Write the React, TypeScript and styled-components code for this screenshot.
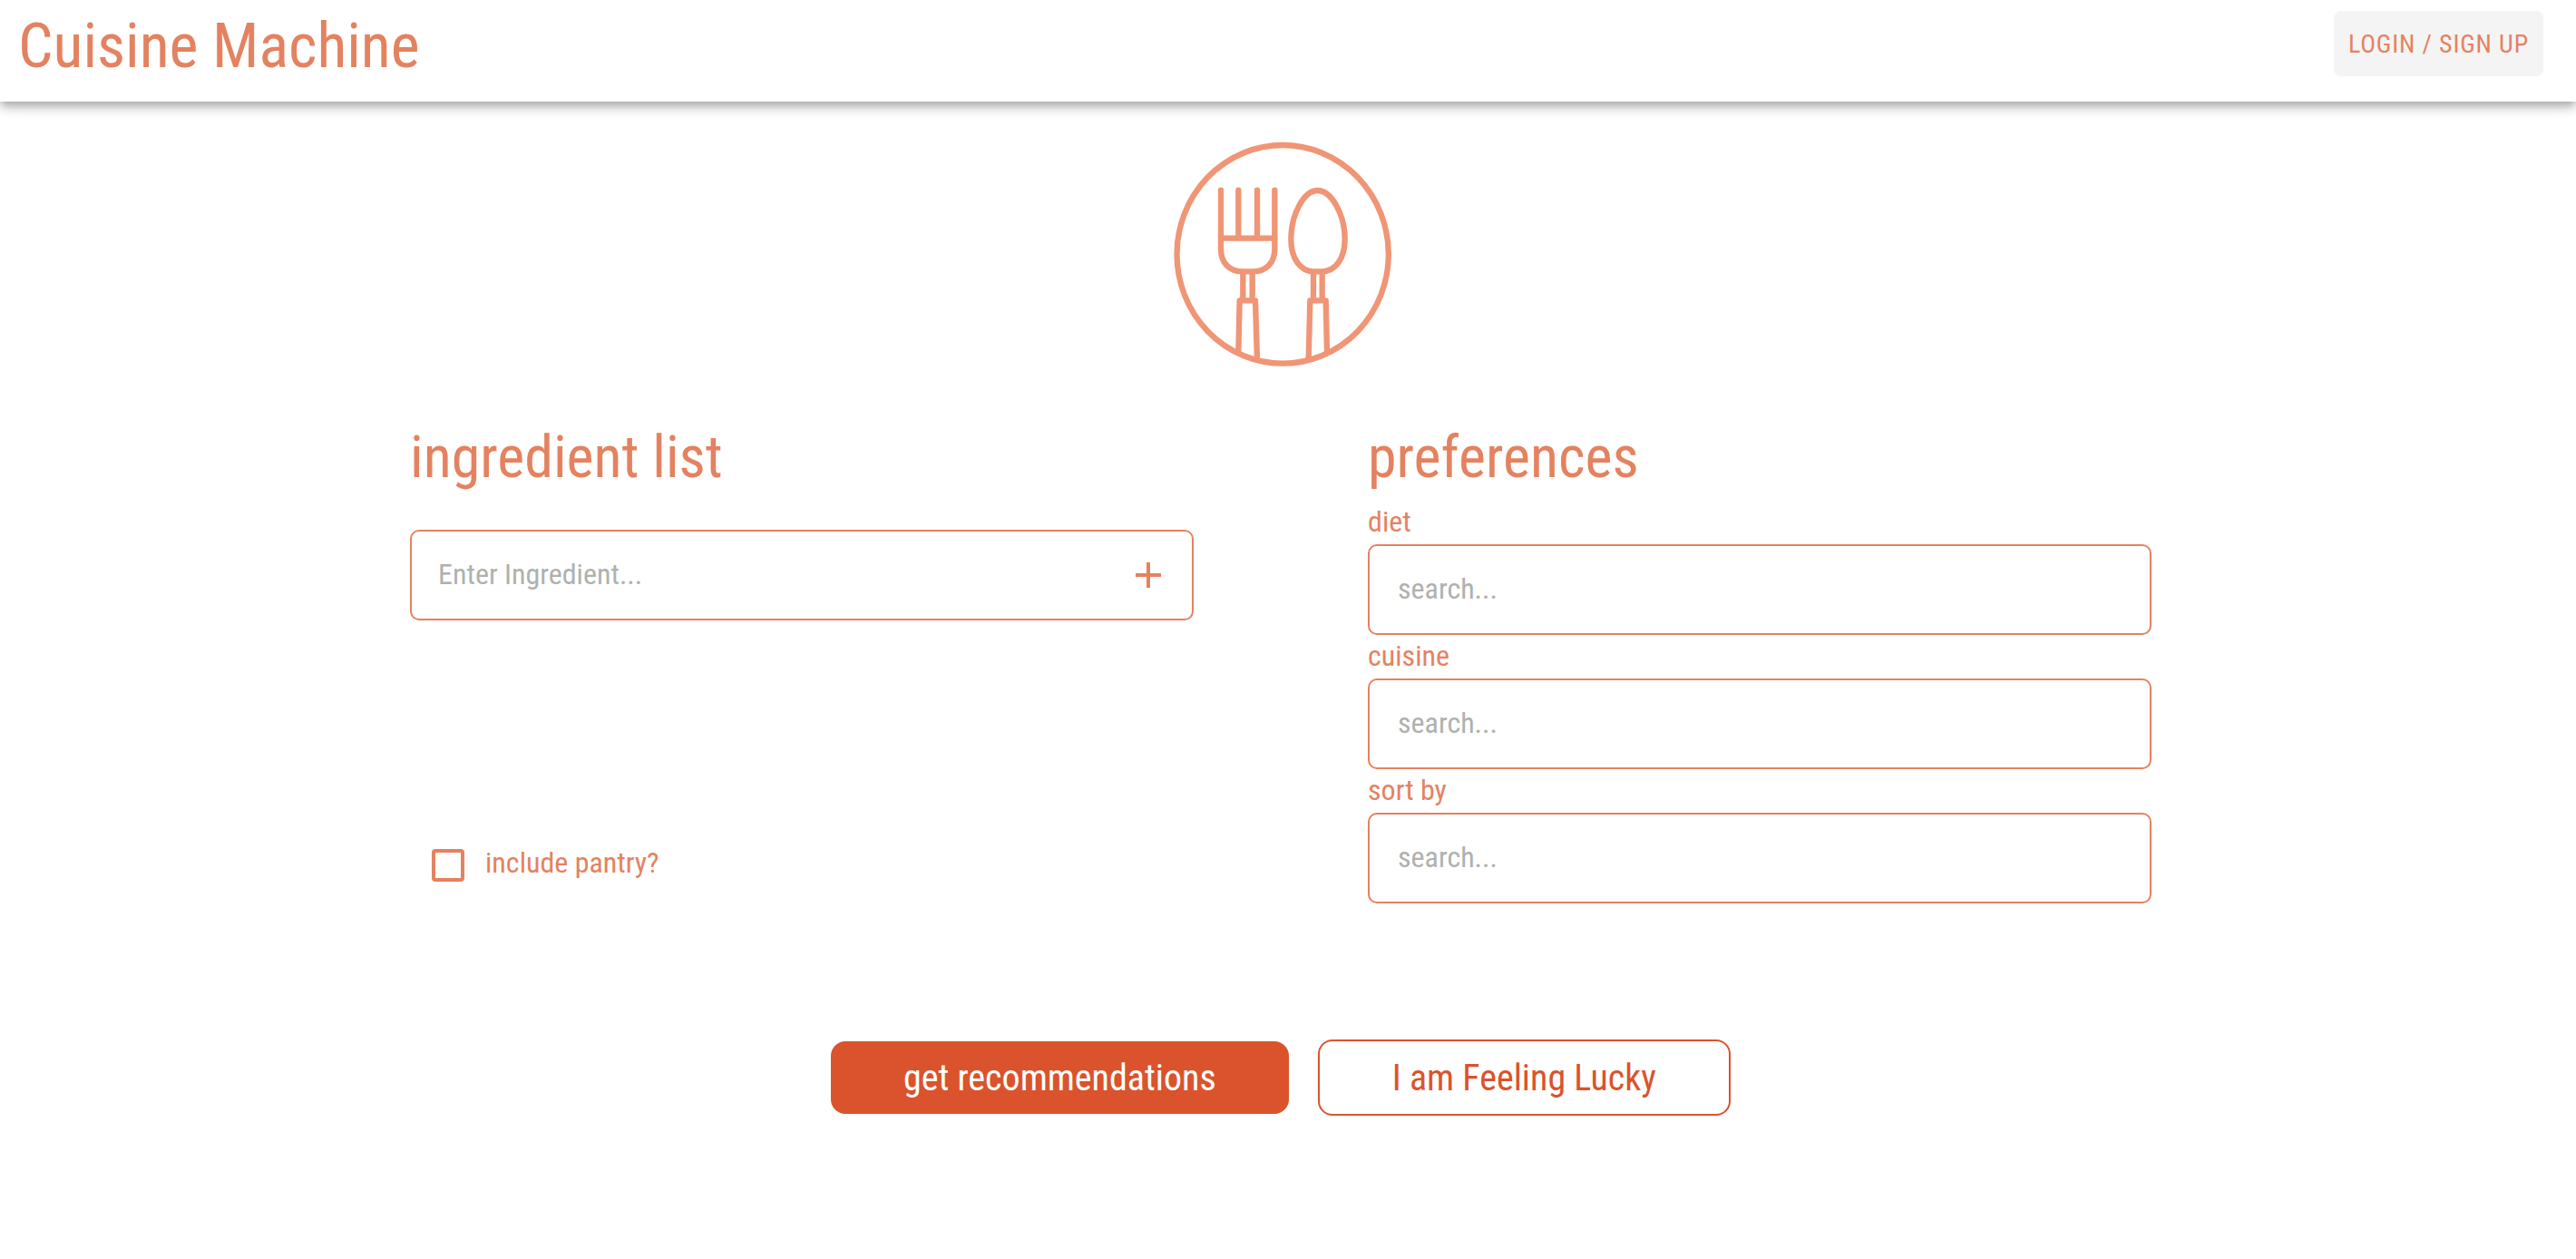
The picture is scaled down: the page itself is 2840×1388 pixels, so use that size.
import React from "react";
import styled, { createGlobalStyle } from "styled-components";

const coral = "#e48260";
const rust = "#da532c";

const GlobalStyle = createGlobalStyle`
  *, *::before, *::after { box-sizing: border-box; }
  body {
    margin: 0;
    background: #fff;
    color: ${coral};
    font-family: "Roboto Condensed", Roboto, sans-serif;
    font-size: 32px;
  }
  button, input { font-family: inherit; }
`;

const Header = styled.header`
  display: flex;
  align-items: flex-start;
  justify-content: space-between;
  height: 112px;
  padding: 12px 36px 0 20px;
  background: #fff;
  box-shadow:
    0 4px 8px -2px rgba(0, 0, 0, 0.2),
    0 8px 10px 0 rgba(0, 0, 0, 0.14),
    0 2px 20px 0 rgba(0, 0, 0, 0.12);
`;

const Brand = styled.h1`
  margin: 0;
  font-size: 68px;
  font-weight: 400;
  line-height: 78px;
`;

const LoginButton = styled.button`
  height: 72px;
  padding: 0 16px;
  border: 0;
  border-radius: 8px;
  background: #f4f4f4;
  color: ${coral};
  font-size: 28px;
  letter-spacing: 0.03em;
  text-transform: uppercase;
  cursor: pointer;
`;

const Main = styled.main`
  display: flex;
  flex-direction: column;
  align-items: center;
  padding: 44px 16px 44px 0;
`;

const Logo = styled.svg`
  width: 244px;
  height: 248px;
  fill: none;
  stroke: #f09575;
  stroke-width: 19;
  stroke-linejoin: round;
`;

const Columns = styled.div`
  display: grid;
  grid-template-columns: 1fr 1fr;
  gap: 10%;
  width: 100%;
  max-width: 1920px;
  margin-top: 62px;
`;

const Column = styled.section<{ $gap: number }>`
  display: flex;
  flex-direction: column;

  > h2 { margin-bottom: ${(p) => p.$gap}px; }
`;

const Heading = styled.h2`
  margin: 0;
  font-size: 64px;
  font-weight: 400;
  line-height: 78px;
`;

const FieldBox = styled.div<{ $inset: number }>`
  display: flex;
  align-items: center;
  height: 100px;
  padding: 0 24px 0 ${(p) => p.$inset}px;
  border: 2px solid ${coral};
  border-radius: 10px;
`;

const FieldInput = styled.input`
  flex: 1;
  min-width: 0;
  height: 100%;
  padding: 0 0 2px;
  border: 0;
  outline: 0;
  background: transparent;
  color: ${coral};
  font-size: 32px;

  &::placeholder { color: #afb1ae; opacity: 1; }
`;

const AddButton = styled.button`
  display: flex;
  padding: 0;
  border: 0;
  background: none;
  color: ${coral};
  cursor: pointer;
`;

const FieldLabel = styled.label`
  margin-bottom: 2px;
  line-height: 46px;
`;

const PantryLabel = styled.label`
  display: flex;
  align-items: flex-end;
  gap: 23px;
  margin-top: auto;
  padding: 0 0 24px 24px;
  line-height: 42px;
`;

const PantryCheckbox = styled.input`
  appearance: none;
  width: 36px;
  height: 36px;
  margin: 0;
  border: 4px solid ${coral};
  border-radius: 4px;

  &:checked { background: ${coral}; }
`;

const Actions = styled.div`
  display: flex;
  flex-wrap: wrap;
  align-items: center;
  justify-content: center;
  gap: 32px;
  margin-top: 150px;
`;

const ActionButton = styled.button<{ $outlined?: boolean }>`
  height: ${(p) => (p.$outlined ? 84 : 80)}px;
  padding: 0 80px;
  border: ${(p) => (p.$outlined ? `2px solid ${rust}` : "0")};
  border-radius: 16px;
  background: ${(p) => (p.$outlined ? "transparent" : rust)};
  color: ${(p) => (p.$outlined ? rust : "#fff")};
  font-size: 40px;
  cursor: pointer;
`;

const preferences = [
  { id: "diet", label: "diet" },
  { id: "cuisine", label: "cuisine" },
  { id: "sort", label: "sort by" },
];

function CutleryLogo() {
  return (
    <Logo viewBox="30 48 732 744" role="img" aria-label="Fork and spoon">
      <ellipse cx="402.500" cy="421" rx="350" ry="361" />
      <g strokeLinecap="round">
        <path d="M198 209V404C198 450 228 478 268 478H306C346 478 376 450 376 404V209" />
        <path d="M256 209V368M318 209V368M198 368H376" />
        <path d="M518 210C472 210 430 290 430 372C430 436 462 478 504 478H532C576 478 608 436 608 372C608 290 564 210 518 210Z" />
      </g>
      <path d="M271 478V574M302 478V574M504 478V574M533 478V574" />
      <path d="M256 744L260 574H312L318 772M488 770L493 574H545L549 744" />
    </Logo>
  );
}

export default function App() {
  return (
    <>
      <GlobalStyle />
      <Header>
        <Brand>Cuisine Machine</Brand>
        <LoginButton type="button">Login / Sign up</LoginButton>
      </Header>
      <Main>
        <CutleryLogo />
        <Columns>
          <Column $gap={40}>
            <Heading>ingredient list</Heading>
            <FieldBox $inset={29}>
              <FieldInput placeholder="Enter Ingredient..." aria-label="Ingredient" />
              <AddButton type="button" aria-label="Add ingredient">
                <svg width="48" height="48" viewBox="0 0 24 24" fill="currentColor">
                  <path d="M19 13h-6v6h-2v-6H5v-2h6V5h2v6h6v2z" />
                </svg>
              </AddButton>
            </FieldBox>
            <PantryLabel>
              <PantryCheckbox type="checkbox" />
              include pantry?
            </PantryLabel>
          </Column>
          <Column $gap={8}>
            <Heading>preferences</Heading>
            {preferences.map(({ id, label }) => (
              <React.Fragment key={id}>
                <FieldLabel htmlFor={id}>{label}</FieldLabel>
                <FieldBox $inset={31}>
                  <FieldInput id={id} placeholder="search..." />
                </FieldBox>
              </React.Fragment>
            ))}
          </Column>
        </Columns>
        <Actions>
          <ActionButton type="button">get recommendations</ActionButton>
          <ActionButton type="button" $outlined>
            I am Feeling Lucky
          </ActionButton>
        </Actions>
      </Main>
    </>
  );
}
